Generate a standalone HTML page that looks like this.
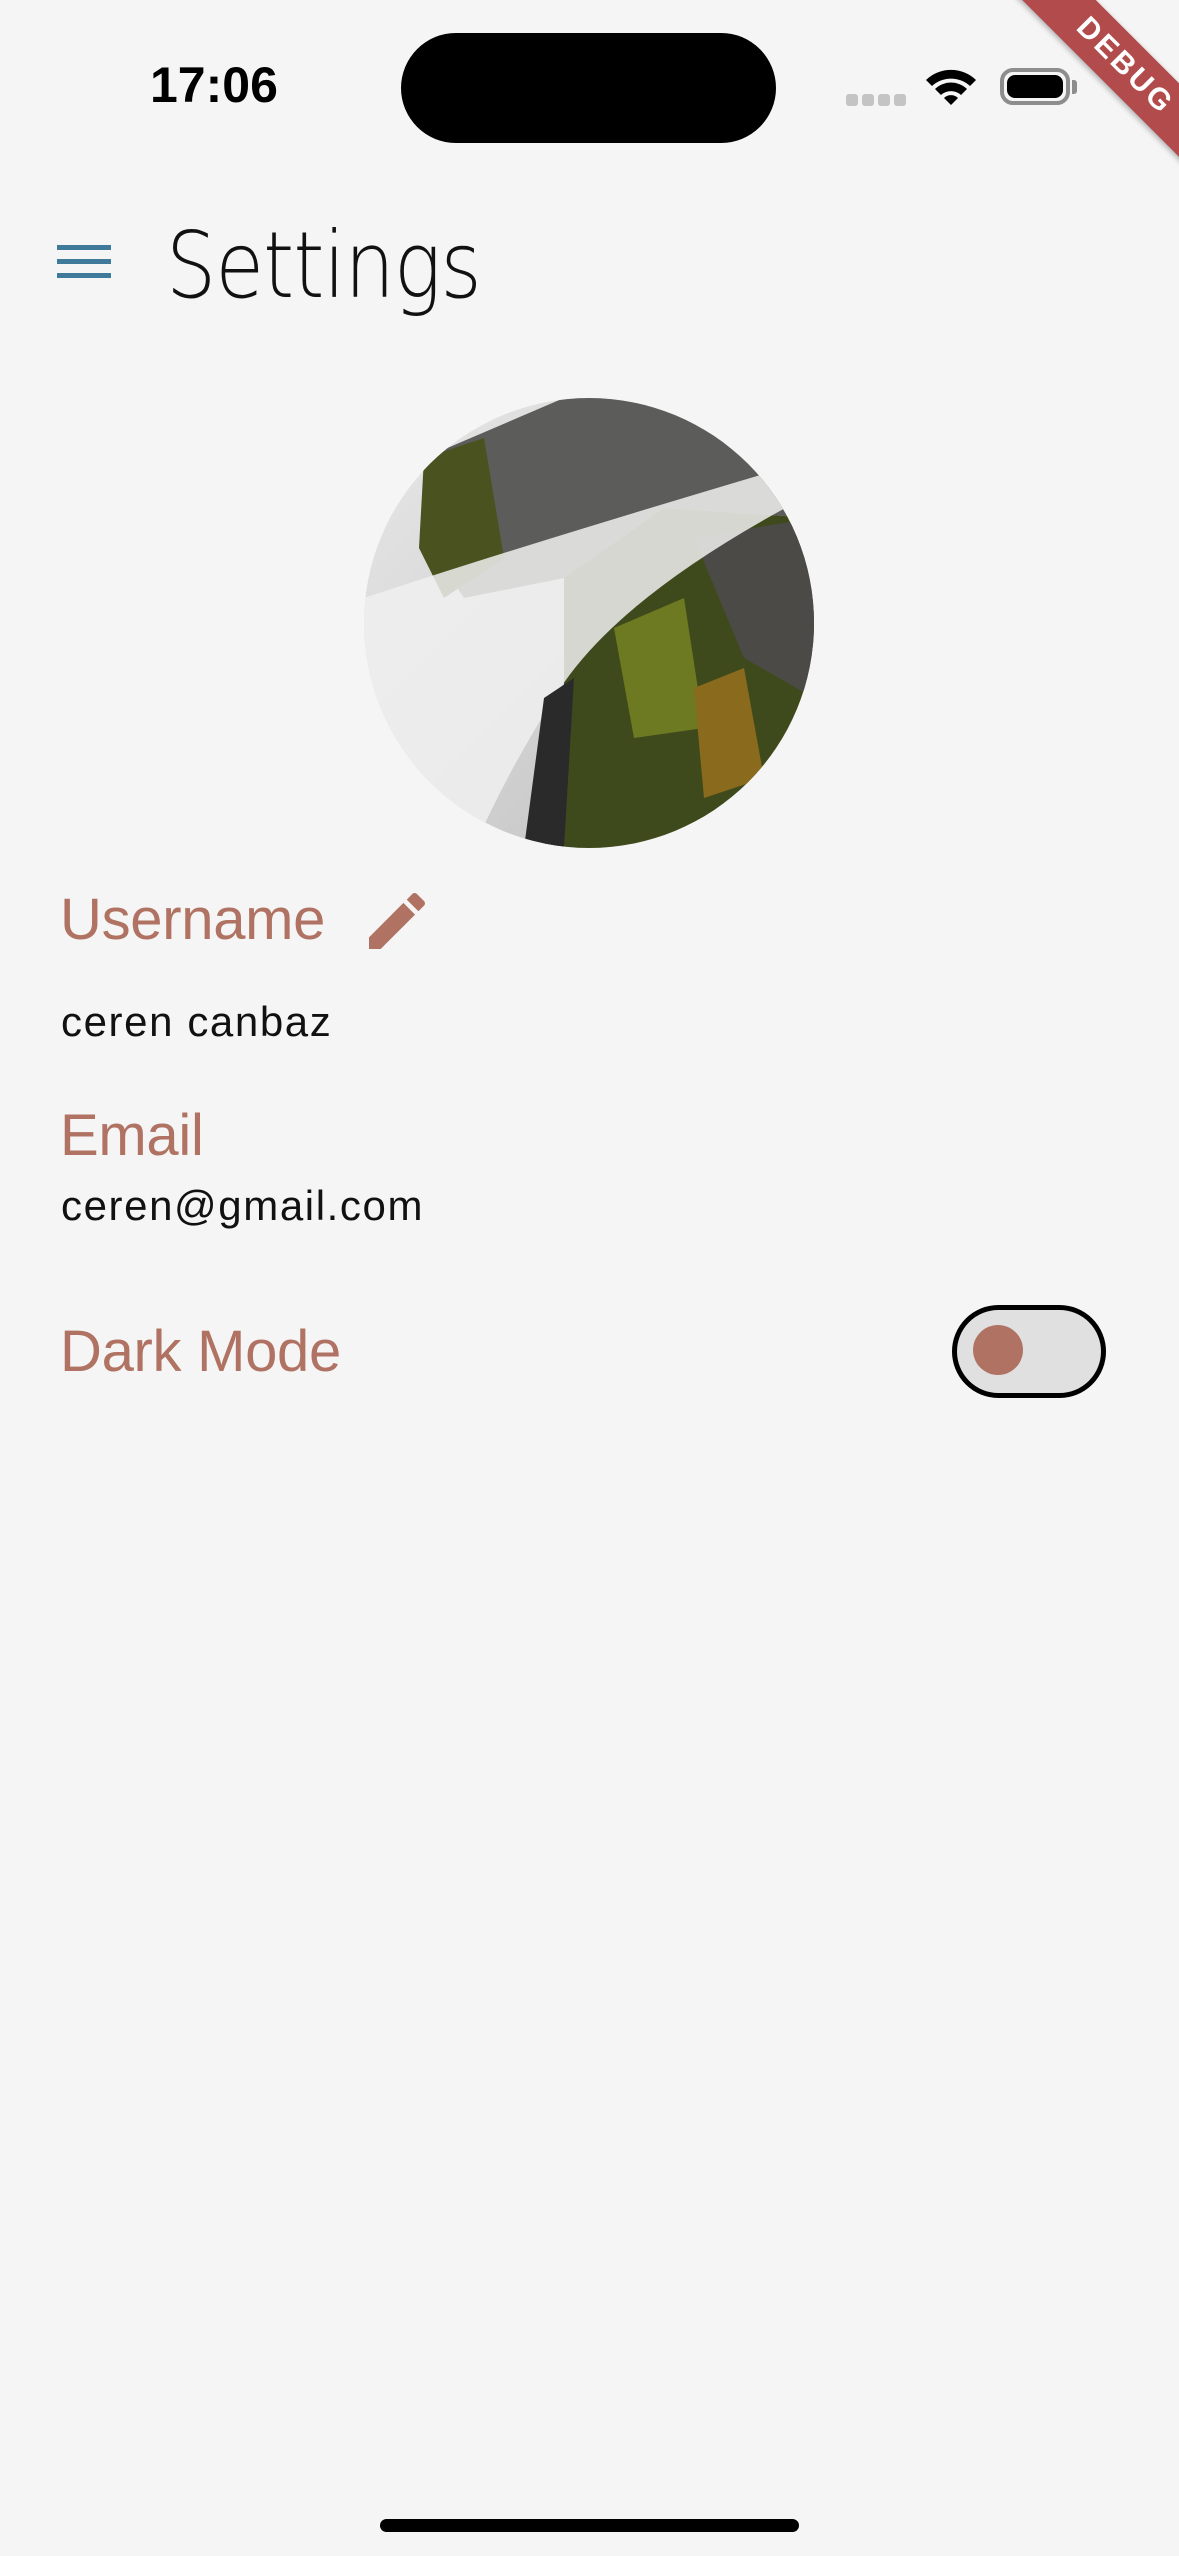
<!DOCTYPE html>
<html><head><meta charset="utf-8"><style>
html,body{margin:0;padding:0;width:1179px;height:2556px;background:#f5f5f5;overflow:hidden;position:relative;font-family:"Liberation Sans",sans-serif}
.abs{position:absolute}
.lbl{color:#b07262;font-size:58px;left:60px;letter-spacing:-0.3px}
.val{color:#111;font-size:42px;left:61px;letter-spacing:1.6px}
</style></head><body>
<div class="abs" style="left:150px;top:56px;font-size:50px;font-weight:bold;color:#000">17:06</div>
<div class="abs" style="left:401px;top:33px;width:375px;height:110px;border-radius:55px;background:#000"></div>
<div class="abs" style="left:846px;top:94px;width:12px;height:12px;border-radius:3px;background:#c4c4c4;box-shadow:16px 0 0 #c4c4c4,32px 0 0 #c4c4c4,48px 0 0 #c4c4c4"></div>
<svg class="abs" style="left:924px;top:66px" width="54" height="42" viewBox="0 0 54 42">
<path d="M2 14 A36 36 0 0 1 52 14 L46 20 A28 28 0 0 0 8 20Z" fill="#000"/>
<path d="M11 23 A23 23 0 0 1 43 23 L37 29 A15 15 0 0 0 17 29Z" fill="#000"/>
<path d="M20 32 A10 10 0 0 1 34 32 L27 39Z" fill="#000"/></svg>
<div class="abs" style="left:1000px;top:68px;width:70px;height:37px;border:4px solid #8d8d8d;border-radius:13px;box-sizing:border-box;padding:3px"><div style="width:100%;height:100%;background:#000;border-radius:8px"></div></div>
<div class="abs" style="left:1072px;top:80px;width:5px;height:14px;background:#8d8d8d;border-radius:0 3px 3px 0"></div>
<div class="abs" style="left:975px;top:40px;width:300px;height:52px;background:#b24b4b;transform:rotate(45deg);transform-origin:center;color:#fff;font-weight:bold;font-size:30px;text-align:center;line-height:52px;letter-spacing:3px;box-shadow:0 2px 6px rgba(0,0,0,.3)">DEBUG</div>
<div class="abs" style="left:57px;top:245px;width:54px;height:5px;background:#3f7a9a;box-shadow:0 14px 0 #3f7a9a,0 28px 0 #3f7a9a"></div>
<div class="abs" style="left:166px;top:212px;font-size:92px;font-weight:300;color:#111;letter-spacing:-1px;font-family:'DejaVu Sans','Liberation Sans',sans-serif;transform:scaleX(0.86);transform-origin:left">Settings</div>
<svg class="abs" style="left:364px;top:398px" width="450" height="450" viewBox="0 0 450 450">
<defs><clipPath id="c"><circle cx="225" cy="225" r="225"/></clipPath>
<linearGradient id="w" x1="0" y1="0" x2="1" y2="1"><stop offset="0" stop-color="#e8e8e8"/><stop offset="1" stop-color="#bdbdbd"/></linearGradient></defs>
<g clip-path="url(#c)">
<rect width="450" height="450" fill="url(#w)"/>
<path d="M60 60 L200 0 L450 0 L450 120 L300 110 L200 180 L100 200 L60 140Z" fill="#5c5c5a"/>
<path d="M60 60 L120 40 L140 160 L80 200 L55 150Z" fill="#4a5220"/>
<path d="M200 180 L300 110 L450 120 L450 450 L180 450 L200 300Z" fill="#3f4a1c"/>
<path d="M330 140 L450 120 L450 300 L380 260Z" fill="#4b4a46"/>
<path d="M250 230 L320 200 L340 330 L270 340Z" fill="#6d7a22"/>
<path d="M330 290 L380 270 L400 380 L340 400Z" fill="#8a6a1c"/>
<path d="M0 200 Q150 150 420 70 L440 100 Q250 200 190 300 Q140 380 110 450 L0 450Z" fill="#f0f0f0" opacity=".85"/>
<path d="M180 300 L210 280 L200 450 L160 450Z" fill="#2a2a2a"/>
</g></svg>
<div class="abs lbl" style="top:886px">Username</div>
<svg class="abs" style="left:368px;top:893px" width="58" height="56" viewBox="3 3 18 18"><path fill="#b07262" d="M3 17.25V21h3.75L17.81 9.94l-3.75-3.75L3 17.25zM20.71 7.04a1 1 0 0 0 0-1.41l-2.34-2.34a1 1 0 0 0-1.41 0l-1.83 1.83 3.75 3.75 1.83-1.83z"/></svg>
<div class="abs val" style="top:998px">ceren canbaz</div>
<div class="abs lbl" style="top:1102px">Email</div>
<div class="abs val" style="top:1182px">ceren@gmail.com</div>
<div class="abs lbl" style="top:1318px">Dark Mode</div>
<div class="abs" style="left:952px;top:1305px;width:154px;height:93px;border:5px solid #000;border-radius:47px;background:#e0e0e0;box-sizing:border-box"></div>
<div class="abs" style="left:973px;top:1325px;width:50px;height:50px;border-radius:50%;background:#b07262"></div>
<div class="abs" style="left:380px;top:2519px;width:419px;height:13px;border-radius:7px;background:#000"></div>
</body></html>
